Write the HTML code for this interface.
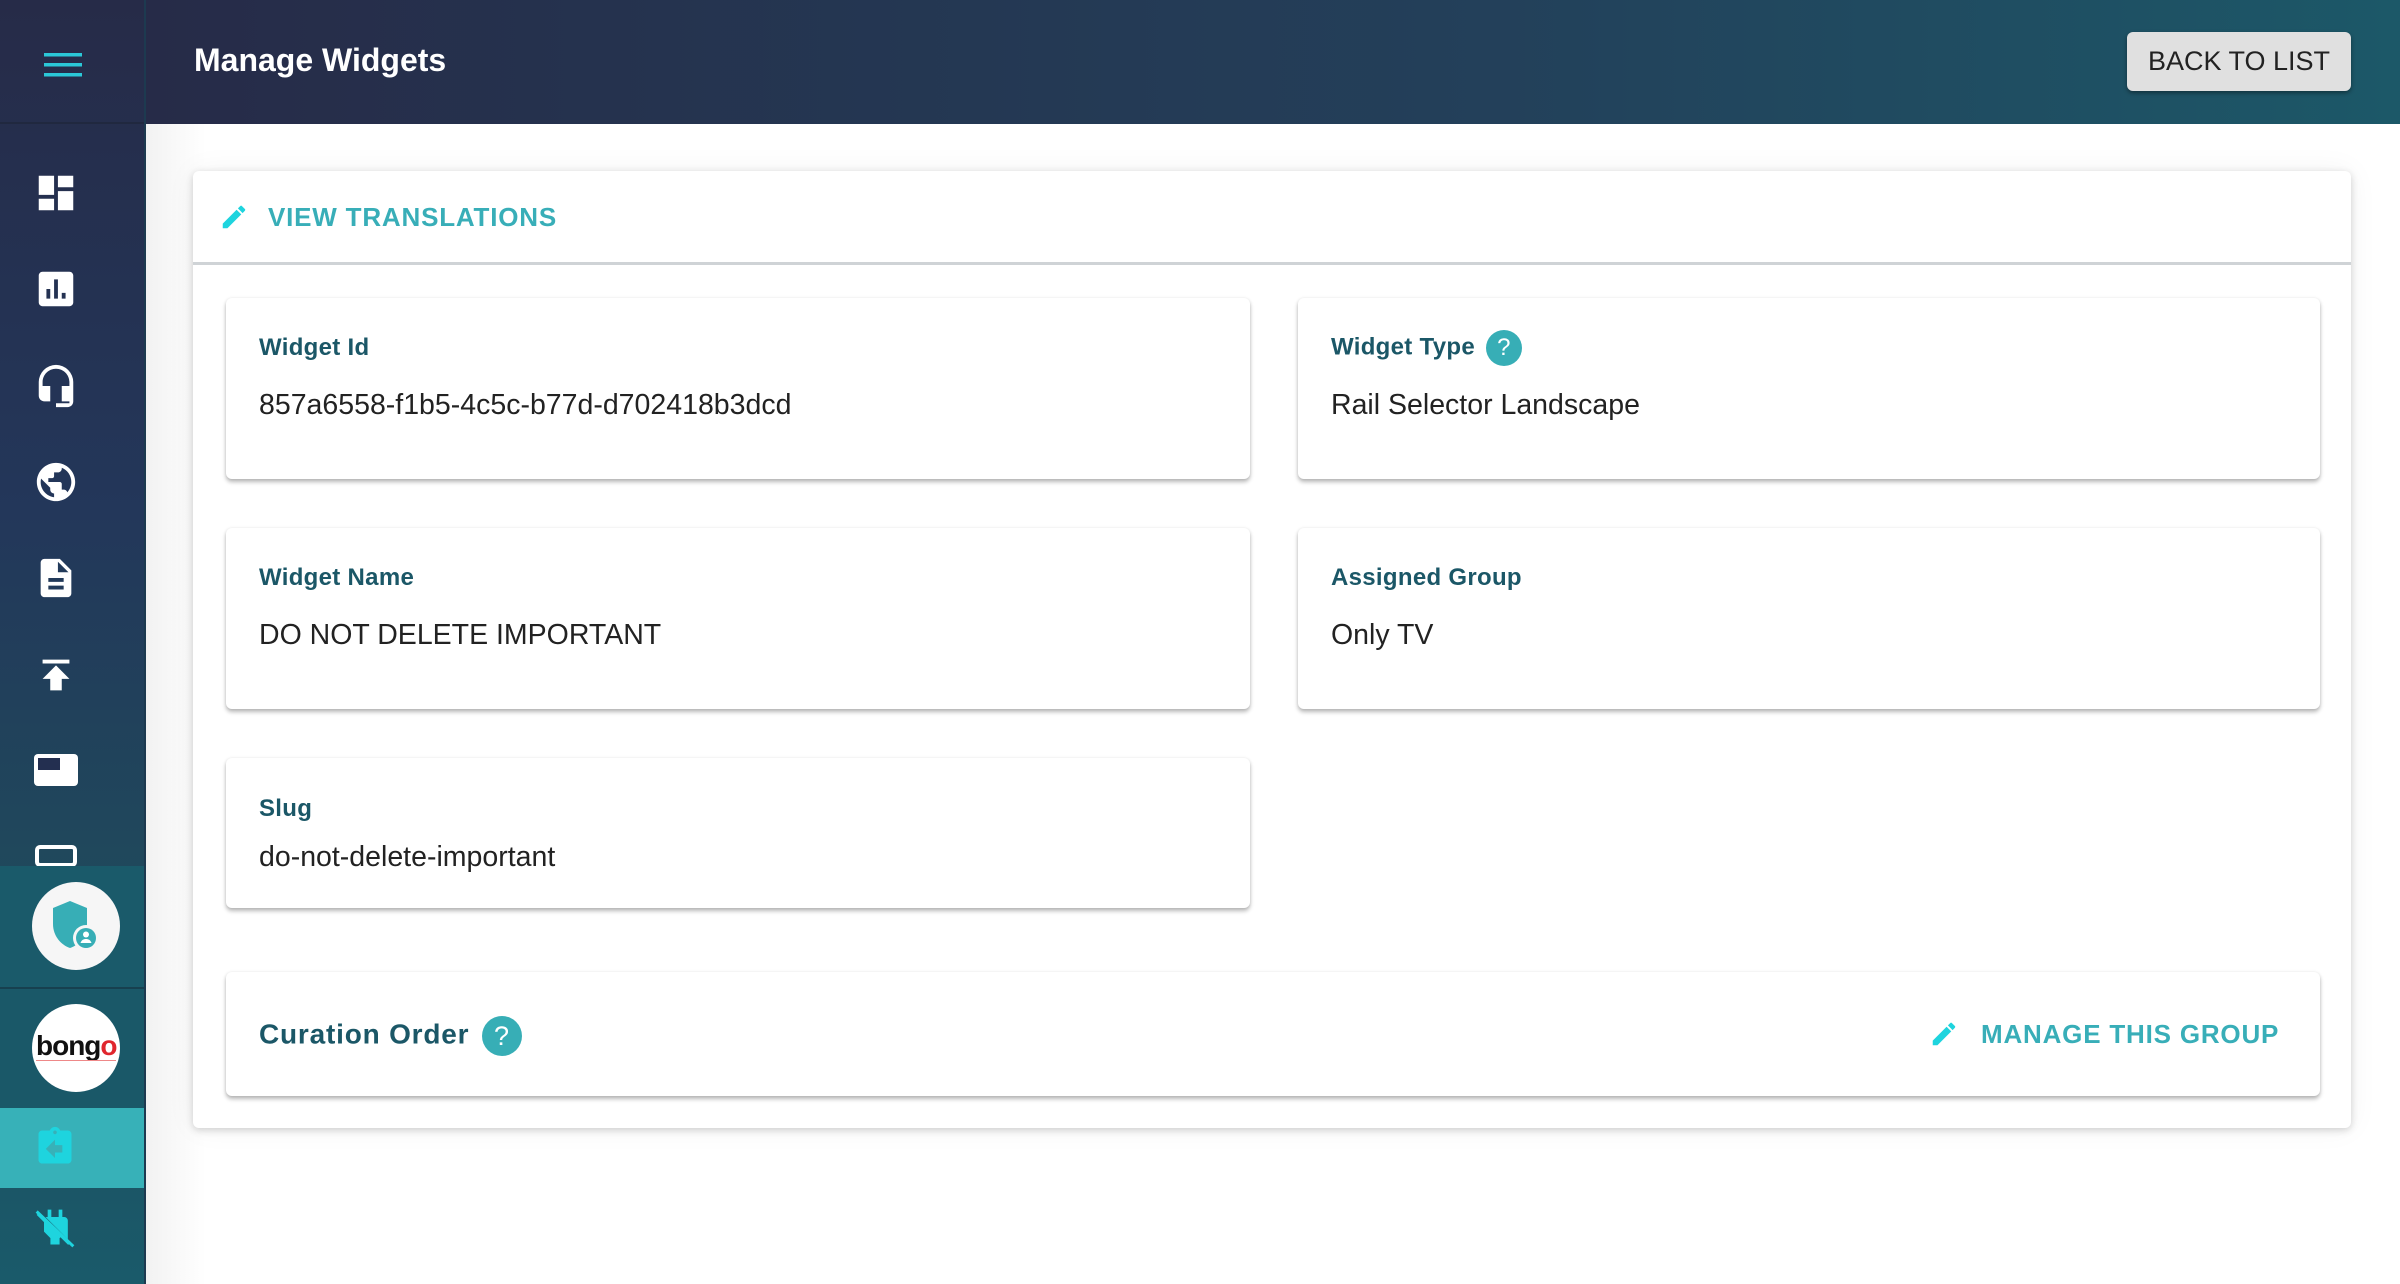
<!DOCTYPE html>
<html><head><meta charset="utf-8"><style>
*{box-sizing:border-box;margin:0;padding:0}
body{width:2400px;height:1284px;overflow:hidden;background:#fff;font-family:"Liberation Sans",sans-serif;position:relative}
.side{position:absolute;left:0;top:0;width:146px;height:1284px;background:linear-gradient(180deg,#262b48 0%,#23375a 40%,#1f4a5c 70%,#1a5a6a 100%);border-right:2px solid #1d3a50;overflow:hidden}
.top{position:absolute;left:146px;top:0;width:2254px;height:124px;background:linear-gradient(90deg,#262b48 0%,#23405a 60%,#1c5868 100%)}
.top h1{position:absolute;left:48px;top:42px;color:#fff;font-size:32px;font-weight:bold}
.btn{position:absolute;left:1981px;top:32px;width:224px;height:59px;background:#e0e0e0;border-radius:6px;box-shadow:0 2px 4px rgba(0,0,0,.4);font-size:27px;color:#222;text-align:center;line-height:59px}
.ic{position:absolute;left:33px}
.main{position:absolute;left:193px;top:171px;width:2158px;height:957px;background:#fff;border-radius:6px;box-shadow:0 2px 8px rgba(0,0,0,.18),0 0 30px rgba(0,0,0,.05)}
.hdr{height:94px;border-bottom:3px solid #cfd3d6;position:relative}
.vt{position:absolute;left:75px;top:31px;color:#38aeb8;font-weight:bold;font-size:26px;letter-spacing:.8px}
.card{position:absolute;background:#fff;border-radius:6px;box-shadow:0 3px 4px rgba(0,0,0,.28),0 0 3px rgba(0,0,0,.08)}
.lbl{position:absolute;left:33px;color:#1b5767;font-weight:bold;font-size:24px;letter-spacing:.3px}
.val{position:absolute;left:33px;color:#222;font-size:28.5px}
.q{display:inline-block;border-radius:50%;background:#37aeb6;color:#fff;text-align:center;font-weight:normal;vertical-align:middle}
</style></head><body>
<div class="side">
 <svg class="ic" style="left:44px;top:53px" width="38" height="24"><rect y="0" width="38" height="3.5" fill="#2bc8d8"/><rect y="10" width="38" height="3.5" fill="#2bc8d8"/><rect y="20" width="38" height="3.5" fill="#2bc8d8"/></svg>
 <div style="position:absolute;left:0;top:122px;width:146px;height:2px;background:#20283f"></div>
 <svg class="ic" style="top:170px" width="46" height="46" viewBox="0 0 24 24"><path fill="#fff" d="M3 13h8V3H3v10zm0 8h8v-6H3v6zm10 0h8V11h-8v10zm0-18v6h8V3h-8z"/></svg>
 <svg class="ic" style="top:266px" width="46" height="46" viewBox="0 0 24 24"><path fill="#fff" d="M19 3H5c-1.1 0-2 .9-2 2v14c0 1.1.9 2 2 2h14c1.1 0 2-.9 2-2V5c0-1.1-.9-2-2-2zM9 17H7v-5h2v5zm4 0h-2V7h2v10zm4 0h-2v-3h2v3z"/></svg>
 <svg class="ic" style="top:362px" width="46" height="48" viewBox="0 0 24 24"><path fill="#fff" d="M12 1a9 9 0 00-9 9v7c0 1.66 1.34 3 3 3h3v-8H5v-2c0-3.87 3.13-7 7-7s7 3.13 7 7v2h-4v8h4v1h-7v2h6c1.66 0 3-1.34 3-3V10a9 9 0 00-9-9z"/></svg>
 <svg class="ic" style="top:459px" width="46" height="46" viewBox="0 0 24 24"><path fill="#fff" d="M12 2C6.48 2 2 6.48 2 12s4.48 10 10 10 10-4.48 10-10S17.52 2 12 2zm-1 17.930c-3.95-.49-7-3.85-7-7.93 0-.62.08-1.21.21-1.79L9 15v1c0 1.1.9 2 2 2v1.93zm6.9-2.54c-.26-.81-1-1.39-1.9-1.39h-1v-3c0-.55-.45-1-1-1H8v-2h2c.55 0 1-.45 1-1V7h2c1.1 0 2-.9 2-2v-.41c2.93 1.19 5 4.06 5 7.41 0 2.080-.8 3.97-2.1 5.39z"/></svg>
 <svg class="ic" style="top:554px" width="46" height="48" viewBox="0 0 24 24"><path fill="#fff" d="M14 2H6c-1.1 0-2 .9-2 2v16c0 1.1.9 2 2 2h12c1.1 0 2-.9 2-2V8l-6-6zm2 16H8v-2h8v2zm0-4H8v-2h8v2zm-3-5V3.5L18.5 9H13z"/></svg>
 <svg class="ic" style="top:652px" width="46" height="46" viewBox="0 0 24 24"><path fill="#fff" d="M5 4v2h14V4H5zm0 10h4v6h6v-6h4l-7-7-7 7z"/></svg>
 <svg class="ic" style="left:33px;top:750px" width="46" height="40" viewBox="0 0 46 40"><rect x="1" y="4" width="44" height="32" rx="4" fill="#fff"/><rect x="5" y="8" width="22" height="12" fill="#232f50"/></svg>
 <svg class="ic" style="left:35px;top:845px" width="42" height="22"><rect x="2" y="2" width="38" height="18" rx="3" fill="none" stroke="#fff" stroke-width="4"/></svg>
 <div style="position:absolute;left:0;top:866px;width:144px;height:121px;background:#1a5a6a"></div>
 <div style="position:absolute;left:0;top:987px;width:144px;height:2px;background:#17404f"></div>
 <div style="position:absolute;left:0;top:989px;width:144px;height:119px;background:#1a5868"></div>
 <div style="position:absolute;left:32px;top:882px;width:88px;height:88px;border-radius:50%;background:#f6f6f6">
  <svg style="position:absolute;left:18px;top:18px" width="56" height="56" viewBox="0 0 56 56"><path fill="#37aeb6" d="M3 8 L20 1 L37 8 V24 C37 36 29 45 20 48 C11 45 3 36 3 24 Z"/><circle cx="36" cy="38" r="13" fill="#f6f6f6"/><circle cx="36" cy="38" r="10" fill="#37aeb6"/><circle cx="36" cy="34.5" r="3" fill="#fff"/><path fill="#fff" d="M30.5 43c1-3 3-4 5.5-4s4.5 1 5.5 4z"/></svg>
 </div>
 <div style="position:absolute;left:32px;top:1004px;width:88px;height:88px;border-radius:50%;background:#fff;overflow:hidden">
  <div style="position:absolute;left:4px;top:26px;font-weight:bold;font-size:28px;color:#111;letter-spacing:-1px">bong<span style="color:#e0262e">o</span></div>
  <div style="position:absolute;left:4px;top:56px;width:80px;height:1px;background:#e88"></div>
 </div>
 <div style="position:absolute;left:0;top:1108px;width:144px;height:80px;background:#37b1b8"></div>
 <svg class="ic" style="top:1124px" width="44" height="46" viewBox="0 0 24 24"><path fill="#1ed4de" d="M19 3h-4.18C14.4 1.84 13.3 1 12 1s-2.4.84-2.82 2H5c-1.1 0-2 .9-2 2v14c0 1.1.9 2 2 2h14c1.1 0 2-.9 2-2V5c0-1.1-.9-2-2-2zm-7 0c.55 0 1 .45 1 1s-.45 1-1 1-1-.45-1-1 .45-1 1-1zm4 12h-4v3l-5-5 5-5v3h4v4z"/></svg>
 <svg class="ic" style="top:1206px" width="44" height="44" viewBox="0 0 24 24"><path fill="#1ed4de" d="M19 14V8c0-1.1-.9-2-2-2h-1V2h-2v4h-4V2H8v4H6.83L19 18.17V14zM3.41 3.41 2 4.82l4 4V14l3.5 3.5V21h5v-3.5l.48-.48 4.2 4.2 1.41-1.41z"/><path stroke="#1ed4de" stroke-width="1.6" d="M2 3l20 19"/></svg>
</div>
<div class="top"><h1>Manage Widgets</h1><div class="btn">BACK TO LIST</div></div>
<div style="position:absolute;left:146px;top:124px;width:2254px;height:1160px;background:linear-gradient(90deg,#f2f2f2 0,#fff 60px)"></div>
<div class="main">
 <div class="hdr">
  <svg style="position:absolute;left:26px;top:31px" width="30" height="30" viewBox="0 0 24 24"><path fill="#1ed4de" d="M3 17.25V21h3.75L17.81 9.94l-3.75-3.75L3 17.25zM20.71 7.04a1 1 0 000-1.41l-2.34-2.34a1 1 0 00-1.41 0l-1.83 1.83 3.75 3.75 1.83-1.83z"/></svg>
  <div class="vt">VIEW TRANSLATIONS</div>
 </div>
</div>
<div class="card" style="left:226px;top:298px;width:1024px;height:181px"><div class="lbl" style="top:36px">Widget Id</div><div class="val" style="top:91px">857a6558-f1b5-4c5c-b77d-d702418b3dcd</div></div>
<div class="card" style="left:1298px;top:298px;width:1022px;height:181px"><div class="lbl" style="top:32px">Widget Type <span class="q" style="width:36px;height:36px;line-height:36px;font-size:24px;margin-left:4px">?</span></div><div class="val" style="top:91px">Rail Selector Landscape</div></div>
<div class="card" style="left:226px;top:528px;width:1024px;height:181px"><div class="lbl" style="top:36px">Widget Name</div><div class="val" style="top:91px">DO NOT DELETE IMPORTANT</div></div>
<div class="card" style="left:1298px;top:528px;width:1022px;height:181px"><div class="lbl" style="top:36px">Assigned Group</div><div class="val" style="top:91px">Only TV</div></div>
<div class="card" style="left:226px;top:758px;width:1024px;height:150px"><div class="lbl" style="top:37px">Slug</div><div class="val" style="top:83px">do-not-delete-important</div></div>
<div class="card" style="left:226px;top:972px;width:2094px;height:124px">
 <div class="lbl" style="top:44px;font-size:28px;letter-spacing:.8px">Curation Order <span class="q" style="width:40px;height:40px;line-height:40px;font-size:27px;margin-left:4px">?</span></div>
 <svg style="position:absolute;left:1703px;top:47px" width="30" height="30" viewBox="0 0 24 24"><path fill="#1ed4de" d="M3 17.25V21h3.75L17.81 9.94l-3.75-3.75L3 17.25zM20.71 7.04a1 1 0 000-1.41l-2.34-2.34a1 1 0 00-1.41 0l-1.83 1.83 3.75 3.75 1.83-1.83z"/></svg>
 <div style="position:absolute;left:1755px;top:47px;color:#38aeb8;font-weight:bold;font-size:26px;letter-spacing:.8px">MANAGE THIS GROUP</div>
</div>
</body></html>
